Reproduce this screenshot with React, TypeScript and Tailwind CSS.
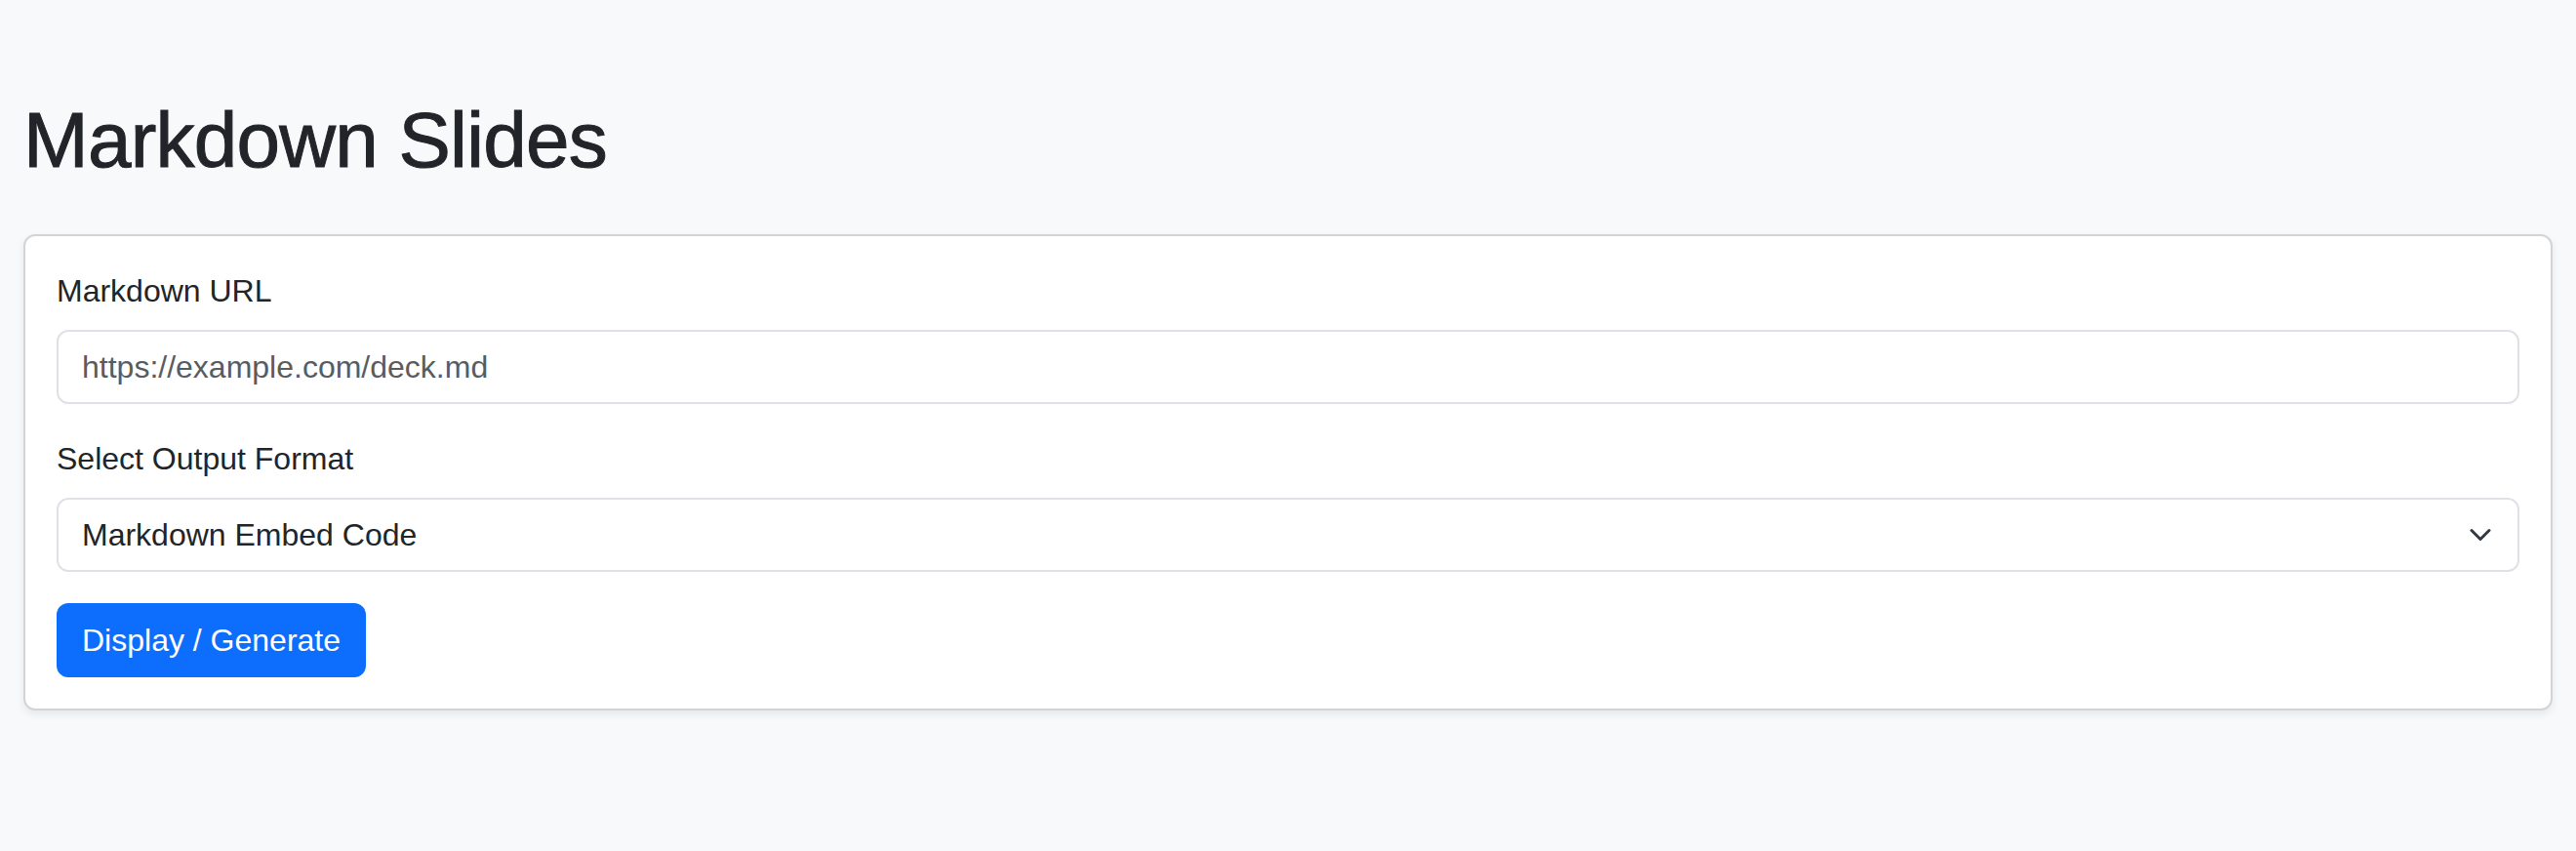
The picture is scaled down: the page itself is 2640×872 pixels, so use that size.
import React from "react";

export default function App() {
  return (
    <div className="min-h-[872px] bg-[#f8f9fa] text-[#212529] font-['Liberation_Sans',Arial,sans-serif] px-6 py-24">
      <h1 className="text-[80px] leading-[1.2] font-medium tracking-[-0.75px] [-webkit-text-stroke:1px_#212529] mb-12">Markdown Slides</h1>
      <div className="bg-white border-2 border-[#d3d4d5] rounded-xl shadow-[0_4px_8px_rgba(0,0,0,0.075)] p-8">
        <label className="block text-[32px] leading-[1.5] mb-4">Markdown URL</label>
        <input
          type="text"
          placeholder="https://example.com/deck.md"
          className="block w-full h-[76px] bg-white border-2 border-[#dee2e6] rounded-xl px-6 text-[32px] leading-[1.5] text-[#212529] placeholder:text-[#595c5f] outline-none mb-8"
        />
        <label className="block text-[32px] leading-[1.5] mb-4">Select Output Format</label>
        <div className="relative mb-8">
          <div className="flex items-center w-full h-[76px] bg-white border-2 border-[#dee2e6] rounded-xl pl-6 pr-[72px] text-[32px] leading-[1.5]">
            Markdown Embed Code
          </div>
          <svg
            className="absolute right-[28px] top-1/2 -translate-y-1/2"
            width="24"
            height="24"
            viewBox="0 0 16 16"
            fill="none"
          >
            <path d="m2 5 6 6 6-6" stroke="#343a40" strokeWidth="2" strokeLinecap="round" strokeLinejoin="round" />
          </svg>
        </div>
        <button className="h-[76px] px-6 bg-[#0d6efd] border-2 border-[#0d6efd] rounded-xl text-white text-[32px] leading-[1.5]">
          Display / Generate
        </button>
      </div>
    </div>
  );
}
